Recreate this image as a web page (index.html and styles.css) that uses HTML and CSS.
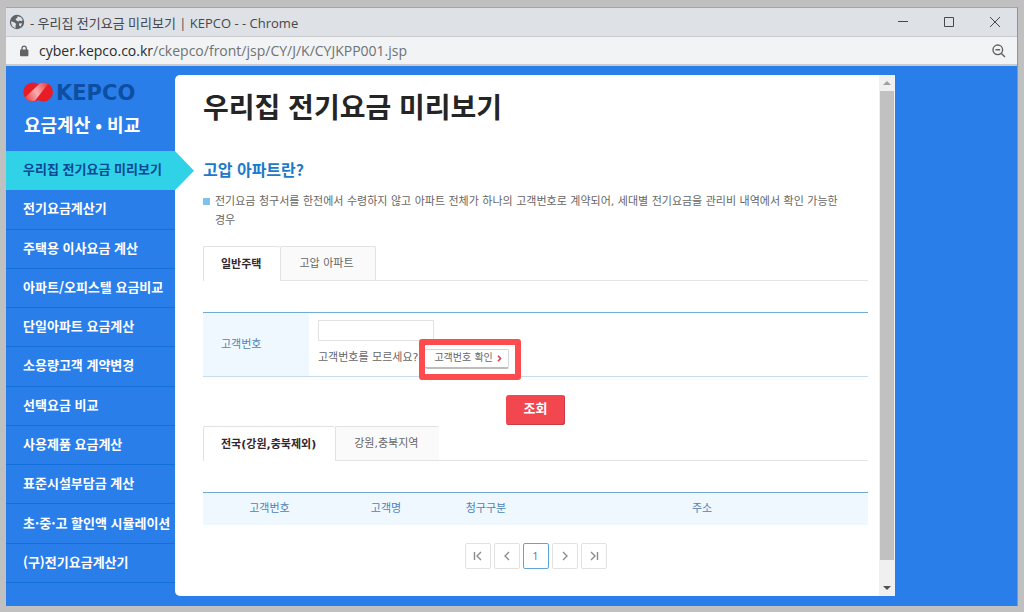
FILE: index.html
```html
<!DOCTYPE html>
<html lang="ko">
<head>
<meta charset="utf-8">
<title>우리집 전기요금 미리보기 | KEPCO</title>
<link rel="stylesheet" href="styles.css">
</head>
<body>
<div class="window">
  <header class="titlebar">
    <svg class="globe" viewBox="0 0 16 16" aria-hidden="true"><circle cx="8" cy="8" r="7.2" fill="#5f6368"/><path d="M2.2 7.2 5.5 8.4 7.2 10 6.4 12 6.8 14C4 13.6 1.8 11 2.2 7.2ZM8.6 2.2 12 3.3 13.8 6 12.4 7.2 10.6 6.4 9.4 7.6 7.4 6.6 6.4 5 8.2 4ZM10.2 9.2 13.2 9.6 11.6 12.4 10 11.6Z" fill="#dee1e6"/></svg>
    <span class="window-title">- 우리집 전기요금 미리보기 | KEPCO - - Chrome</span>
    <div class="window-controls">
      <button type="button" aria-label="최소화"><svg viewBox="0 0 12 12"><path d="M1 5.5h10"/></svg></button>
      <button type="button" aria-label="최대화"><svg viewBox="0 0 12 12"><path d="M1.5 1.5h9v9h-9z"/></svg></button>
      <button type="button" aria-label="닫기"><svg viewBox="0 0 12 12"><path d="M1 1l10 10M11 1L1 11"/></svg></button>
    </div>
  </header>
  <div class="addressbar">
    <svg class="lock" viewBox="0 0 10 12" aria-hidden="true"><rect x="1" y="4.6" width="8.4" height="6.6" rx="1" fill="#5f6368"/><path d="M3 5V3.2a2.1 2.1 0 0 1 4.3 0V5" fill="none" stroke="#5f6368" stroke-width="1.3"/></svg>
    <span class="url"><span class="host">cyber.kepco.co.kr</span>/ckepco/front/jsp/CY/J/K/CYJKPP001.jsp</span>
    <button type="button" class="zoom" aria-label="축소"><svg viewBox="0 0 14 14"><circle cx="5.8" cy="5.8" r="4.8"/><path d="M3.5 5.8h4.6M9.4 9.4 13 13"/></svg></button>
  </div>
  <div class="page">
    <aside class="sidebar">
      <div class="brand">
        <svg class="logo" viewBox="0 0 116 24" role="img" aria-label="KEPCO">
          <defs><linearGradient id="band" x1="0" y1="0.7" x2="1" y2="0.3"><stop offset="0" stop-color="#ee4a50"/><stop offset="0.5" stop-color="#f7b0b2"/><stop offset="1" stop-color="#ee4a50"/></linearGradient></defs>
          <ellipse cx="10" cy="10" rx="9.7" ry="9.4" fill="#e81c27"/>
          <ellipse cx="20.3" cy="10" rx="9.7" ry="9.4" fill="#e81c27"/>
          <path d="M2 15.500 17 1.300Q21 0 25 2L12 18.800Q5.500 20 2 15.500Z" fill="url(#band)"/>
          <text x="33" y="18" class="wordmark">KEPCO</text>
        </svg>
        <strong class="brand-title">요금계산 • 비교</strong>
      </div>
      <nav class="menu">
        <a href="#" class="active">우리집 전기요금 미리보기</a>
        <a href="#">전기요금계산기</a>
        <a href="#">주택용 이사요금 계산</a>
        <a href="#">아파트/오피스텔 요금비교</a>
        <a href="#">단일아파트 요금계산</a>
        <a href="#">소용량고객 계약변경</a>
        <a href="#">선택요금 비교</a>
        <a href="#">사용제품 요금계산</a>
        <a href="#">표준시설부담금 계산</a>
        <a href="#">초·중·고 할인액 시뮬레이션</a>
        <a href="#">(구)전기요금계산기</a>
      </nav>
    </aside>
    <div class="panel">
      <main class="content">
        <h1>우리집 전기요금 미리보기</h1>
        <h2>고압 아파트란?</h2>
        <p class="note">전기요금 청구서를 한전에서 수령하지 않고 아파트 전체가 하나의 고객번호로 계약되어, 세대별 전기요금을 관리비 내역에서 확인 가능한<br>경우</p>
        <div class="tabs">
          <button type="button" class="tab selected">일반주택</button>
          <button type="button" class="tab">고압 아파트</button>
        </div>
        <form class="search">
          <div class="search-row">
            <label for="customer">고객번호</label>
            <div class="field">
              <input type="text" id="customer">
              <div class="hint"><span>고객번호를 모르세요?</span><span class="highlight"><button type="button" class="check">고객번호 확인<svg viewBox="0 0 5 7" aria-hidden="true"><path d="M1 .8 3.500 3.500 1 6.200"/></svg></button></span></div>
            </div>
          </div>
          <button type="button" class="submit">조회</button>
        </form>
        <div class="tabs region-tabs">
          <button type="button" class="tab selected">전국(강원,충북제외)</button>
          <button type="button" class="tab open">강원,충북지역</button>
        </div>
        <table class="results">
          <colgroup><col class="c-number"><col class="c-name"><col class="c-type"><col></colgroup>
          <thead><tr><th scope="col">고객번호</th><th scope="col">고객명</th><th scope="col">청구구분</th><th scope="col">주소</th></tr></thead>
        </table>
        <div class="pager">
          <button type="button" aria-label="처음"><svg viewBox="0 0 10 10"><path d="M1.500 1v8M8 1 4 5l4 4"/></svg></button>
          <button type="button" aria-label="이전"><svg viewBox="0 0 10 10"><path d="M7 1 3 5l4 4"/></svg></button>
          <button type="button" class="current">1</button>
          <button type="button" aria-label="다음"><svg viewBox="0 0 10 10"><path d="M3 1l4 4-4 4"/></svg></button>
          <button type="button" aria-label="마지막"><svg viewBox="0 0 10 10"><path d="M2 1l4 4-4 4M8.500 1v8"/></svg></button>
        </div>
      </main>
      <div class="scrollbar" aria-hidden="true"><i class="arrow up"></i><i class="thumb"></i><i class="arrow down"></i></div>
    </div>
  </div>
</div>
</body>
</html>
```
FILE: styles.css
```css
* { box-sizing: border-box; }
body {
  margin: 0;
  padding: 7px 6px 6px;
  min-height: 100vh;
  display: flex;
  background: #c0c0c0;
  color: #666;
  font: 11px/19px "DejaVu Sans", "Noto Sans CJK KR", sans-serif;
}
button, input { font: inherit; color: inherit; margin: 0; }
button { padding: 0; background: none; border: 0; }
svg { fill: none; display: block; }
a { color: inherit; text-decoration: none; }

.window {
  flex: 1;
  display: flex;
  flex-direction: column;
  min-width: 0;
  border-top: 1px solid #a3a5a8;
  border-right: 1px solid #8f949b;
}
.titlebar {
  display: flex;
  align-items: center;
  height: 29px;
  padding: 0 16px 0 3px;
  background: #dee1e6;
  border-bottom: 1px solid #c8cacd;
}
.globe { width: 16px; height: 16px; }
.window-title {
  margin: 1px 0 0 5px;
  color: #45484c;
  font: 13px/20px "Open Sans", "Noto Sans CJK KR", sans-serif;
}
.window-controls { margin-left: auto; display: flex; gap: 34px; }
.window-controls svg { width: 12px; height: 12px; stroke: #45484c; }
.addressbar {
  display: flex;
  align-items: center;
  height: 29px;
  padding: 0 11px 0 13px;
  background: #f1f3f4;
  border-bottom: 2px solid #c9cbce;
}
.lock { width: 10px; height: 12px; }
.url {
  margin-left: 10px;
  color: #6e7276;
  font: 14px/20px "Open Sans", sans-serif;
}
.host { color: #2a2c2f; }
.zoom { margin-left: auto; }
.zoom svg { width: 14px; height: 14px; stroke: #5f6368; stroke-width: 1.4; }

.page {
  flex: 1;
  display: grid;
  grid-template-columns: 169px minmax(0, 720px) minmax(0, 1fr);
  background: #297eea;
}
.sidebar {
  display: flex;
  flex-direction: column;
  padding: 16px 0 23px;
  font-family: "Noto Sans CJK KR", sans-serif;
}
.brand { height: 69px; padding-left: 17px; }
.logo { width: 116px; height: 24px; }
.wordmark { font: bold 21px "DejaVu Sans", sans-serif; fill: #0e4fa4; }
.brand-title {
  display: block;
  margin-top: 5px;
  padding-left: 1px;
  color: #fff;
  font-size: 18px;
  line-height: 26px;
}
.menu { flex: 1; display: grid; grid-auto-rows: 1fr; }
.menu a {
  display: flex;
  align-items: center;
  padding: 0 0 3px 17px;
  min-height: 39px;
  border-bottom: 1px solid #126fdc;
  color: #fff;
  font-size: 13px;
  font-weight: 700;
  white-space: nowrap;
}
.menu .active {
  position: relative;
  background: #30d2e8;
  border-color: #30d2e8;
  color: #0c4795;
}
.menu .active::after {
  content: "";
  position: absolute;
  left: 100%;
  top: 0;
  bottom: -1px;
  width: 19px;
  background: #30d2e8;
  clip-path: polygon(0 0, 100% 50%, 0 100%);
}

.panel {
  display: flex;
  margin: 9px 0 10px;
  background: #fff;
  border-radius: 5px 0 0 5px;
}
.content { flex: 1; min-width: 0; padding: 10px 11px 0 28px; }
h1, h2, p { margin: 0; }
h1, h2 { font-family: "Noto Sans CJK KR", sans-serif; }
h1 { color: #252525; font-size: 28px; line-height: 42px; }
h2 { margin-top: 30px; color: #1b7ac9; font-size: 16px; line-height: 24px; }
.note {
  margin-top: 11px;
  padding-left: 12px;
  white-space: nowrap;
  background: linear-gradient(#7fc2ec, #7fc2ec) 0 6px / 7px 7px no-repeat;
}
.tabs { display: flex; margin-top: 16px; border-bottom: 1px solid #e4e4e4; }
.tab {
  height: 34px;
  padding: 0 21px 0 18px;
  border: 1px solid #e2e2e2;
  border-bottom: 0;
  border-radius: 2px 2px 0 0;
  background: #fafafa;
}
.tab.selected {
  margin-bottom: -1px;
  padding: 0 19px 0 17px;
  height: 35px;
  border-right: 0;
  background: #fff;
  color: #33262d;
  font-weight: 700;
}
.tab.open { border-right: 0; }
.search { margin-top: 31px; display: flex; flex-direction: column; align-items: center; }
.search-row {
  width: 100%;
  display: flex;
  border-top: 1px solid #6fabdb;
  border-bottom: 1px solid #c8dcec;
}
.search-row label {
  width: 106px;
  display: flex;
  align-items: center;
  padding-left: 18px;
  background: #f0f8ff;
  color: #4d84b8;
}
.field { padding: 7px 0 3px 9px; }
.field input {
  display: block;
  width: 116px;
  height: 21px;
  border: 1px solid #e2e2e2;
  background: #fff;
}
.hint { display: flex; align-items: center; height: 32px; }
.highlight { position: relative; margin: 3px 0 0 7px; }
.highlight::before {
  content: "";
  position: absolute;
  inset: -10px -12px -11px -6px;
  border: 6px solid #fe4b4e;
  border-radius: 3px;
}
.check {
  position: relative;
  display: flex;
  align-items: center;
  gap: 4px;
  height: 20px;
  padding: 0 6px 0 9px;
  border: 1px solid #d6d6d6;
  border-left: 0;
  border-bottom: 2px solid #bdbdbd;
  border-radius: 2px;
  font-size: 10px;
  line-height: 16px;
}
.check svg { width: 5px; height: 7px; stroke: #e23a40; stroke-width: 1.6; }
.submit {
  margin-top: 18px;
  width: 59px;
  height: 30px;
  padding-bottom: 3px;
  border-radius: 3px;
  background: #f2474f;
  box-shadow: inset -1px -1px #cf3a42;
  color: #fff;
  font-size: 13px;
  font-weight: 700;
}
.region-tabs { margin-top: 1px; }
.results {
  width: 100%;
  margin-top: 31px;
  table-layout: fixed;
  border-collapse: collapse;
  border-top: 1px solid #6fa6dc;
  background: #f0f8ff;
}
.results th { height: 32px; padding: 0; color: #4d84b8; font-weight: 400; }
.c-number { width: 133px; }
.c-name { width: 100px; }
.c-type { width: 100px; }
.pager { display: flex; justify-content: center; gap: 3px; margin-top: 18px; }
.pager button {
  width: 26px;
  height: 26px;
  display: grid;
  place-items: center;
  border: 1px solid #e2e2e2;
  border-radius: 2px;
  font-family: "Open Sans", sans-serif;
}
.pager .current { border-color: #5fa5dc; color: #3b7fbe; }
.pager svg { width: 10px; height: 10px; stroke: #8c8c8c; stroke-width: 1.4; }

.scrollbar {
  width: 16px;
  display: flex;
  flex-direction: column;
  align-items: center;
  background: #f0f0f0;
}
.arrow { width: 8px; height: 4px; margin: 6px 0; background: #a0a0a0; clip-path: polygon(50% 0, 100% 100%, 0 100%); }
.arrow.down { background: #505050; clip-path: polygon(0 0, 100% 0, 50% 100%); }
.thumb { width: 14px; flex: 1; margin-bottom: 20px; background: #c1c1c1; }
```
